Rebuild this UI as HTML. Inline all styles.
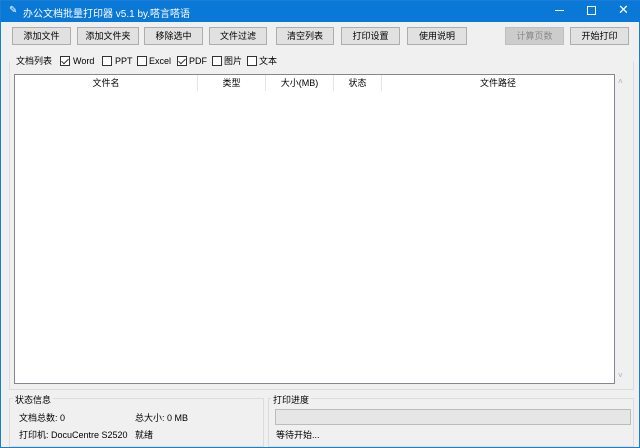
<!DOCTYPE html><html><head><meta charset="utf-8"><style>
*{margin:0;padding:0;box-sizing:border-box}
body{width:640px;height:448px;background:#f0f0f0;font-family:"Liberation Sans","Noto Sans CJK SC",sans-serif;font-size:9px;color:#000;position:relative;overflow:hidden;border:1px solid #1a7fd4}
.a{position:absolute}
.tb{left:0;top:0;width:640px;height:21px;background:#0a78d7;color:#fff;font-size:10px}
.b{position:absolute;top:26px;height:18px;background:#e1e1e1;border:1px solid #adadad;text-align:center;line-height:16px;font-size:9px}
.cb{position:absolute;top:55px;width:10px;height:10px;border:1px solid #333;background:#fff}
.cb.k::after{content:"";position:absolute;left:2px;top:0;width:3px;height:6px;border:solid #333;border-width:0 1px 1px 0;transform:rotate(45deg)}
.l{position:absolute;top:54px;line-height:12px}
.h{top:74px;height:16px;line-height:16px;text-align:center;border-right:1px solid #e5e5e5}
.g{border:1px solid #dcdcdc}
</style></head><body>
<div class="a tb"><span class="a" style="left:8px;top:4px;font-size:10px">✎</span><span class="a" style="left:22px;top:4px">办公文档批量打印器 v5.1 by.嗒言嗒语</span>
<span class="a" style="left:554px;top:9px;width:9px;height:1px;background:#fff"></span>
<span class="a" style="left:586px;top:5px;width:9px;height:9px;border:1px solid #fff"></span>
<span class="a" style="left:617px;top:1px;font-size:13px">✕</span></div>
<div class="b" style="left:11px;width:59px">添加文件</div>
<div class="b" style="left:76px;width:62px">添加文件夹</div>
<div class="b" style="left:143px;width:59px">移除选中</div>
<div class="b" style="left:208px;width:58px">文件过滤</div>
<div class="b" style="left:275px;width:58px">清空列表</div>
<div class="b" style="left:340px;width:59px">打印设置</div>
<div class="b" style="left:406px;width:60px">使用说明</div>
<div class="b" style="left:504px;width:59px;color:#888;background:#ccc;border-color:#bfbfbf">计算页数</div>
<div class="b" style="left:569px;width:59px">开始打印</div>
<div class="a g" style="left:8px;top:60px;width:625px;height:329px;border-top:none"></div>
<div class="a" style="left:12px;top:52px;width:268px;height:16px;background:#f0f0f0"></div>
<div class="l" style="left:15px">文档列表</div>
<div class="cb k" style="left:59px"></div><div class="l" style="left:72px">Word</div>
<div class="cb" style="left:101px"></div><div class="l" style="left:114px">PPT</div>
<div class="cb" style="left:136px"></div><div class="l" style="left:148px">Excel</div>
<div class="cb k" style="left:176px"></div><div class="l" style="left:188px">PDF</div>
<div class="cb" style="left:211px"></div><div class="l" style="left:223px">图片</div>
<div class="cb" style="left:246px"></div><div class="l" style="left:258px">文本</div>
<div class="a" style="left:13px;top:73px;width:601px;height:310px;background:#fff;border:1px solid #828790"></div>
<div class="a h" style="left:14px;width:183px">文件名</div>
<div class="a h" style="left:197px;width:68px">类型</div>
<div class="a h" style="left:265px;width:68px">大小(MB)</div>
<div class="a h" style="left:333px;width:48px">状态</div>
<div class="a h" style="left:381px;width:232px;border:none">文件路径</div>
<div class="a" style="left:617px;top:76px;color:#aaa;font-size:8px">˄</div>
<div class="a" style="left:617px;top:370px;color:#aaa;font-size:8px">˅</div>
<div class="a g" style="left:8px;top:397px;width:255px;height:49px"></div>
<div class="a" style="left:12px;top:392px;background:#f0f0f0;padding:0 2px">状态信息</div>
<div class="a" style="left:18px;top:410px">文档总数: 0</div>
<div class="a" style="left:134px;top:410px">总大小: 0 MB</div>
<div class="a" style="left:18px;top:427px">打印机: DocuCentre S2520</div>
<div class="a" style="left:134px;top:427px">就绪</div>
<div class="a g" style="left:267px;top:397px;width:366px;height:49px"></div>
<div class="a" style="left:270px;top:392px;background:#f0f0f0;padding:0 2px">打印进度</div>
<div class="a" style="left:274px;top:408px;width:356px;height:16px;background:#e6e6e6;border:1px solid #bcbcbc"></div>
<div class="a" style="left:275px;top:427px">等待开始...</div>
</body></html>
